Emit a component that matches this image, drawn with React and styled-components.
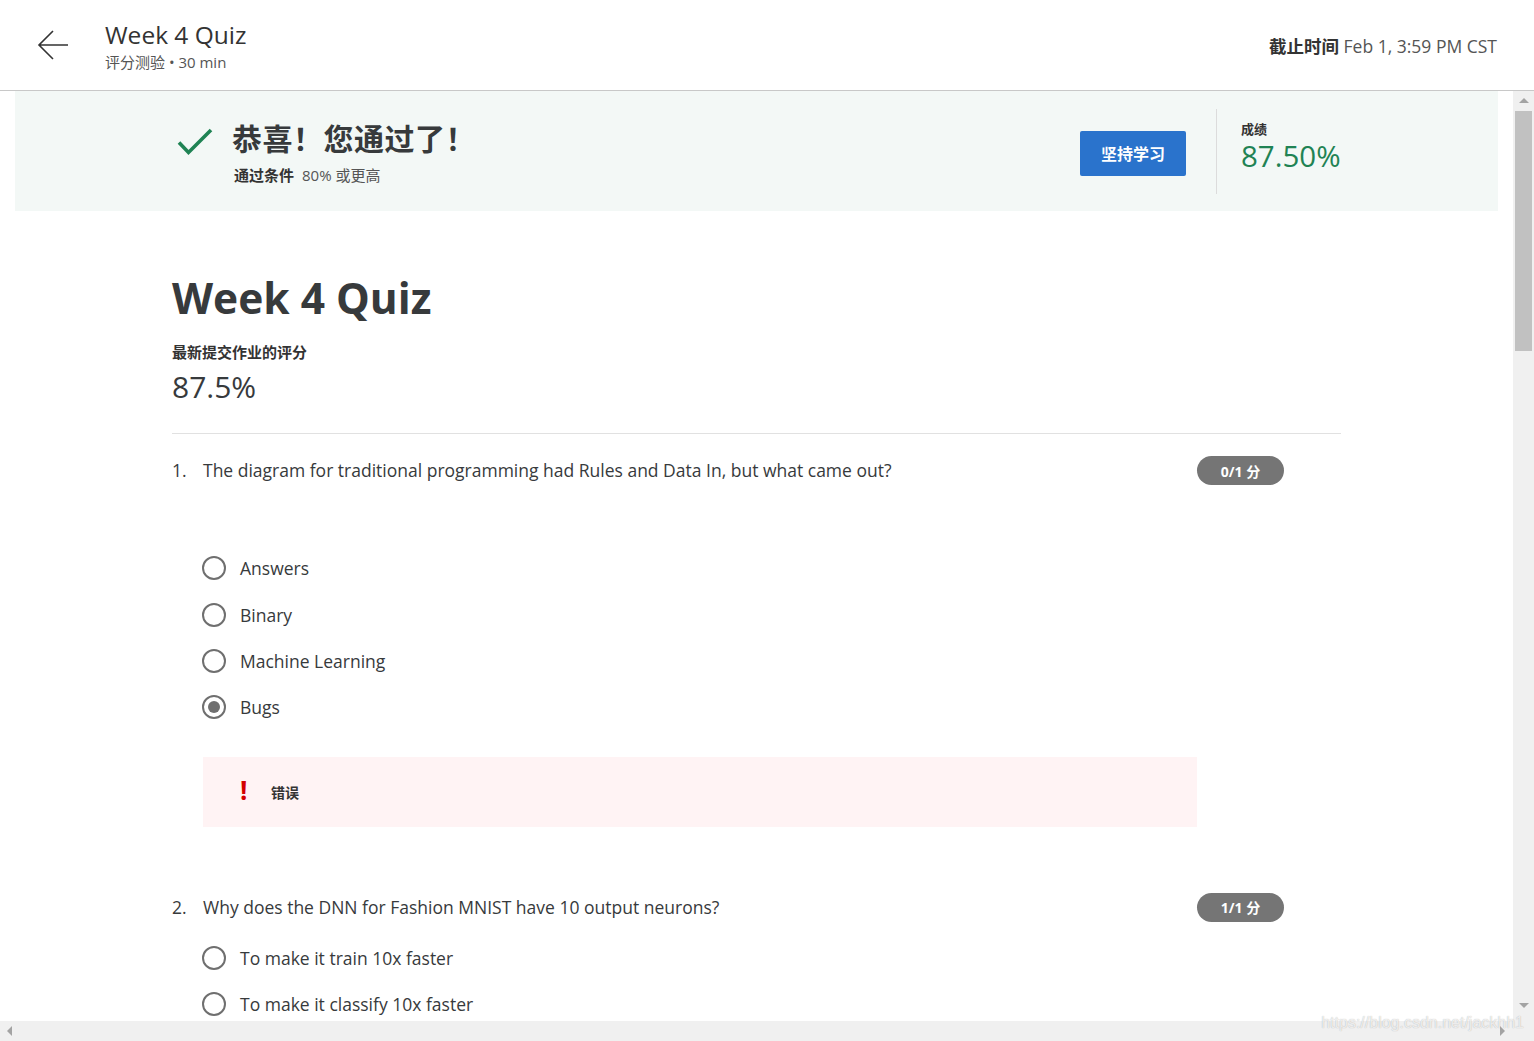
import React from "react";
import styled, { createGlobalStyle } from "styled-components";

const GlobalStyle = createGlobalStyle`
  html, body {
    margin: 0;
    padding: 0;
    overflow: hidden;
    background: #ffffff;
  }
  body {
    font-family: "Open Sans", "Noto Sans CJK SC", sans-serif;
    color: #373a3c;
  }
  * {
    box-sizing: border-box;
  }
`;

const Page = styled.div`
  position: relative;
  display: flex;
  flex-direction: column;
  width: 1534px;
  height: 1041px;
`;

const Header = styled.header`
  display: flex;
  align-items: center;
  height: 91px;
  padding: 0 37px 0 36px;
  border-bottom: 1px solid #c8c8c8;
  flex-shrink: 0;
`;

const BackButton = styled.button`
  display: flex;
  align-items: center;
  justify-content: center;
  width: 34px;
  height: 34px;
  padding: 0;
  border: none;
  background: none;
  margin-right: 35px;
`;

const HeaderTitleBlock = styled.div`
  display: flex;
  flex-direction: column;
  flex: 1;
  margin-top: 1px;
`;

const HeaderTitle = styled.h1`
  margin: 0;
  font-size: 24.5px;
  font-weight: 400;
  line-height: 30px;
  color: #333333;
`;

const HeaderSub = styled.div`
  margin-top: 2px;
  font-size: 15px;
  line-height: 20px;
  color: #555555;
`;

const Deadline = styled.div`
  font-size: 17.5px;
  color: #555555;

  strong {
    font-weight: 700;
    color: #333333;
  }
`;

const Viewport = styled.div`
  display: grid;
  grid-template-columns: 1fr 21px;
  grid-template-rows: 1fr 20px;
  flex: 1;
  min-height: 0;
`;

const Content = styled.main`
  overflow: hidden;
`;

const Banner = styled.section`
  height: 120px;
  margin: 0 15px;
  background: #f3f8f6;
`;

const BannerInner = styled.div`
  display: flex;
  align-items: center;
  width: 1169px;
  height: 100%;
  margin: 0 auto;
  padding-left: 5px;
`;

const PassBlock = styled.div`
  display: flex;
  align-items: flex-start;
  flex: 1;
  gap: 19px;
  margin-top: 4px;

  svg {
    margin-top: 6px;
  }
`;

const PassText = styled.div`
  display: flex;
  flex-direction: column;
`;

const PassTitle = styled.h2`
  margin: 0;
  font-size: 30px;
  font-weight: 700;
  line-height: 36px;
  color: #373a3c;
  letter-spacing: 0.5px;
`;

const PassSub = styled.div`
  margin: 8px 0 0 2px;
  font-size: 15px;
  line-height: 20px;
  color: #555555;

  strong {
    font-weight: 700;
    color: #333333;
    margin-right: 8px;
  }
`;

const KeepButton = styled.button`
  width: 106px;
  height: 45px;
  margin: 4px 30px 0 0;
  border: none;
  border-radius: 2px;
  background: #2a73cc;
  color: #ffffff;
  font-family: "Open Sans", "Noto Sans CJK SC", sans-serif;
  font-size: 16px;
  font-weight: 700;
`;

const VDivider = styled.div`
  width: 1px;
  height: 85px;
  background: #dcdcdc;
  margin-right: 24px;
`;

const ScoreBlock = styled.div`
  display: flex;
  flex-direction: column;
  width: 100px;
  margin-top: -8px;
`;

const ScoreLabel = styled.div`
  font-size: 13px;
  font-weight: 700;
  line-height: 18px;
  color: #333333;
`;

const ScoreValue = styled.div`
  font-size: 29.5px;
  line-height: 36px;
  color: #1f8354;
`;

const Column = styled.div`
  width: 1169px;
  margin: 0 auto;
`;

const QuizTitle = styled.h1`
  margin: 60px 0 0;
  font-size: 42.5px;
  font-weight: 700;
  line-height: 54px;
  color: #373a3c;
`;

const GradeLabel = styled.div`
  margin-top: 18px;
  font-size: 15px;
  font-weight: 700;
  line-height: 18px;
  color: #333333;
`;

const GradeValue = styled.div`
  margin-top: 8px;
  font-size: 30px;
  line-height: 36px;
  color: #373a3c;
`;

const Rule = styled.hr`
  margin: 28px 0 0;
  border: none;
  border-top: 1px solid #e1e1e1;
`;

const Question = styled.section`
  padding-top: ${(p) => p.$top}px;
`;

const QuestionRow = styled.div`
  display: flex;
  align-items: flex-start;
  padding-right: 57px;
`;

const QNumber = styled.span`
  width: 31px;
  font-size: 17.5px;
  line-height: 26px;
`;

const QText = styled.div`
  flex: 1;
  font-size: 17.5px;
  line-height: 26px;
  color: #373a3c;
`;

const Badge = styled.span`
  display: flex;
  align-items: center;
  justify-content: center;
  width: 87px;
  height: 29px;
  margin-top: -1px;
  border-radius: 15px;
  background: #757575;
  color: #ffffff;
  font-size: 14px;
  font-weight: 700;
`;

const Options = styled.div`
  display: flex;
  flex-direction: column;
  gap: 12px;
  margin: ${(p) => p.$top}px 0 0 30px;
`;

const Option = styled.label`
  display: flex;
  align-items: center;
  gap: 14px;
  height: 34.4px;
  font-size: 17.5px;
  color: #373a3c;
`;

const Radio = styled.span`
  display: flex;
  align-items: center;
  justify-content: center;
  width: 24px;
  height: 24px;
  border: 2px solid #6f6f6f;
  border-radius: 50%;

  &::after {
    content: "";
    display: ${(p) => (p.$checked ? "block" : "none")};
    width: 12px;
    height: 12px;
    border-radius: 50%;
    background: #6f6f6f;
  }
`;

const Feedback = styled.div`
  display: flex;
  align-items: center;
  width: 994px;
  height: 70px;
  margin: 32px 0 0 31px;
  padding-left: 37px;
  background: #fff3f4;
  font-size: 14px;
  font-weight: 700;
  color: #333333;
`;

const Bang = styled.span`
  width: 31px;
  color: #d40000;
  font-size: 26px;
  font-weight: 700;
  line-height: 1;
  margin-top: -4px;
`;

const VScroll = styled.div`
  display: flex;
  flex-direction: column;
  align-items: center;
  background: #f0f0f0;
  padding-top: 7px;
`;

const Thumb = styled.div`
  width: 17px;
  height: 240px;
  margin-top: 8px;
  background: #c1c1c1;
`;

const DownArrow = styled.div`
  margin-top: auto;
  margin-bottom: 8px;
`;

const HScroll = styled.div`
  display: flex;
  align-items: center;
  justify-content: space-between;
  padding: 0 8px 0 7px;
  background: #f0f0f0;
`;

const Corner = styled.div`
  background: #f0f0f0;
`;

const Watermark = styled.div`
  position: absolute;
  right: 10px;
  bottom: 9px;
  font-family: "Liberation Sans", Arial, sans-serif;
  font-size: 16px;
  color: rgba(255, 255, 255, 0.75);
  text-shadow: 0 0 1px rgba(0, 0, 0, 0.3);
  pointer-events: none;
`;

function Tri({ dir }) {
  const pts = {
    up: "0,5 5,0 10,5",
    down: "0,0 10,0 5,5",
    left: "5,0 5,10 0,5",
    right: "0,0 0,10 5,5",
  }[dir];
  const horizontal = dir === "left" || dir === "right";
  return (
    <svg
      width={horizontal ? 5 : 10}
      height={horizontal ? 10 : 5}
      viewBox={horizontal ? "0 0 5 10" : "0 0 10 5"}
    >
      <polygon points={pts} fill="#a3a3a3" />
    </svg>
  );
}

const questions = [
  {
    n: 1,
    text: "The diagram for traditional programming had Rules and Data In, but what came out?",
    score: "0/1 分",
    top: 23,
    optionsTop: 66,
    options: ["Answers", "Binary", "Machine Learning", "Bugs"],
    checked: 3,
    wrong: true,
  },
  {
    n: 2,
    text: "Why does the DNN for Fashion MNIST have 10 output neurons?",
    score: "1/1 分",
    top: 67,
    optionsTop: 19,
    options: ["To make it train 10x faster", "To make it classify 10x faster"],
    checked: -1,
  },
];

export default function App() {
  return (
    <Page>
      <GlobalStyle />
      <Header>
        <BackButton aria-label="返回">
          <svg width="32" height="30" viewBox="0 0 32 30">
            <path
              d="M31 15H2M16 1L2 15l14 14"
              fill="none"
              stroke="#333"
              strokeWidth="1.6"
            />
          </svg>
        </BackButton>
        <HeaderTitleBlock>
          <HeaderTitle>Week 4 Quiz</HeaderTitle>
          <HeaderSub>评分测验 • 30 min</HeaderSub>
        </HeaderTitleBlock>
        <Deadline>
          <strong>截止时间</strong> Feb 1, 3:59 PM CST
        </Deadline>
      </Header>

      <Viewport>
        <Content>
          <Banner>
            <BannerInner>
              <PassBlock>
                <svg width="36" height="30" viewBox="0 0 36 30">
                  <path
                    d="M2 15.5l9.5 10L34 3"
                    fill="none"
                    stroke="#1f8354"
                    strokeWidth="3.6"
                  />
                </svg>
                <PassText>
                  <PassTitle>恭喜！您通过了！</PassTitle>
                  <PassSub>
                    <strong>通过条件</strong>80% 或更高
                  </PassSub>
                </PassText>
              </PassBlock>
              <KeepButton>坚持学习</KeepButton>
              <VDivider />
              <ScoreBlock>
                <ScoreLabel>成绩</ScoreLabel>
                <ScoreValue>87.50%</ScoreValue>
              </ScoreBlock>
            </BannerInner>
          </Banner>

          <Column>
            <QuizTitle>Week 4 Quiz</QuizTitle>
            <GradeLabel>最新提交作业的评分</GradeLabel>
            <GradeValue>87.5%</GradeValue>
            <Rule />

            {questions.map((q) => (
              <Question key={q.n} $top={q.top}>
                <QuestionRow>
                  <QNumber>{q.n}.</QNumber>
                  <QText>{q.text}</QText>
                  <Badge>{q.score}</Badge>
                </QuestionRow>
                <Options $top={q.optionsTop}>
                  {q.options.map((o, i) => (
                    <Option key={o}>
                      <Radio $checked={i === q.checked} />
                      {o}
                    </Option>
                  ))}
                </Options>
                {q.wrong && (
                  <Feedback>
                    <Bang>!</Bang>
                    错误
                  </Feedback>
                )}
              </Question>
            ))}
          </Column>
        </Content>

        <VScroll>
          <Tri dir="up" />
          <Thumb />
          <DownArrow>
            <Tri dir="down" />
          </DownArrow>
        </VScroll>
        <HScroll>
          <Tri dir="left" />
          <Tri dir="right" />
        </HScroll>
        <Corner />
      </Viewport>

      <Watermark>https://blog.csdn.net/jackhh1</Watermark>
    </Page>
  );
}
